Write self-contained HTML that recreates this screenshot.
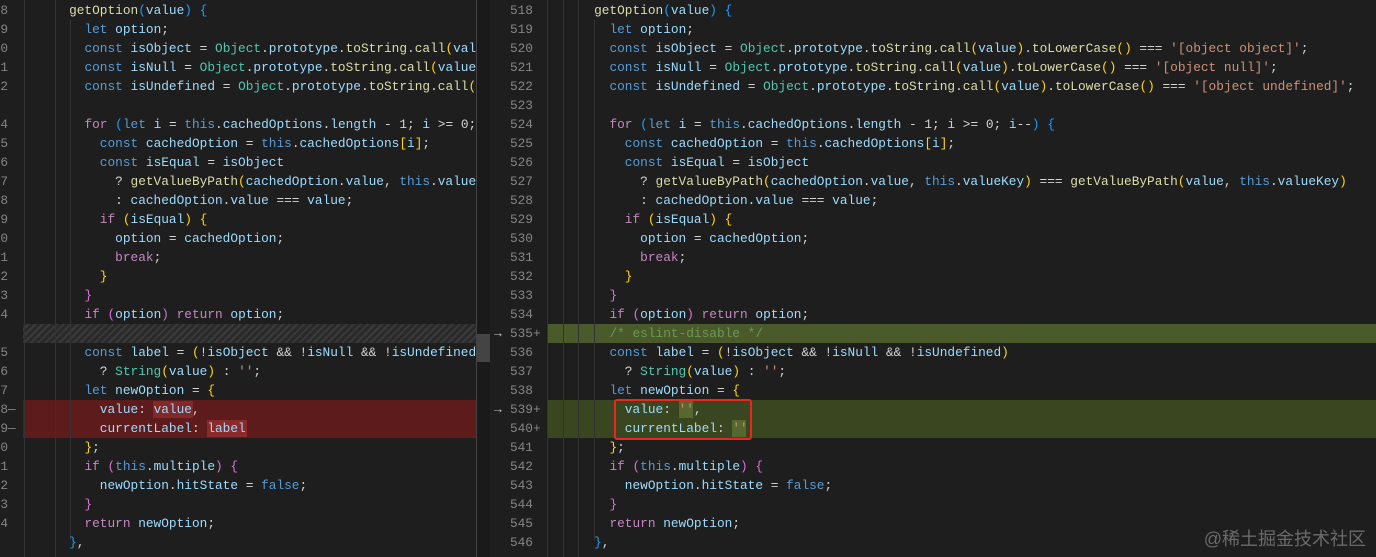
<!DOCTYPE html><html><head><meta charset="utf-8"><style>
body{margin:0;width:1376px;height:557px;background:#1e1e1e;overflow:hidden;position:relative;font-family:"Liberation Mono",monospace;font-size:12.8px;color:#d4d4d4}
.pane{position:absolute;top:0;height:557px;overflow:hidden}
.l{position:absolute;left:0;height:19px;line-height:19px;white-space:pre;width:100%}
.n{position:absolute;white-space:pre;color:#858585;line-height:19px;height:19px;text-align:right}
.k{color:#569cd6}.c{color:#c586c0}.v{color:#9cdcfe}.f{color:#dcdcaa}.t{color:#4ec9b0}.s{color:#ce9178}.m{color:#6a9955}.y{color:#ffd700}.p{color:#da70d6}.b{color:#179fff}
.g{position:absolute;top:0;height:557px;width:1px;background:#333}
</style></head><body>
<div class="pane" style="left:0;width:476px">
<div style="position:absolute;left:23px;top:400px;width:460px;height:38px;background:#5e1b1b"></div>
<div style="position:absolute;left:23px;top:324px;width:460px;height:19px;background:repeating-linear-gradient(135deg,#2a2a2a 0 3px,#3a3a3a 3px 5px)"></div>
<div style="position:absolute;left:153px;top:401px;width:40px;height:17px;background:#822828"></div>
<div style="position:absolute;left:207px;top:420px;width:40px;height:17px;background:#8a2a2a"></div>
<div class="g" style="left:24px"></div><div class="g" style="left:55px"></div><div class="g" style="left:70px;top:20px;height:520px"></div>
<div style="position:absolute;left:0;width:8px">
<div class="n" style="top:1px;right:0">8</div><div class="n" style="top:20px;right:0">9</div><div class="n" style="top:39px;right:0">0</div><div class="n" style="top:58px;right:0">1</div><div class="n" style="top:77px;right:0">2</div><div class="n" style="top:115px;right:0">4</div><div class="n" style="top:134px;right:0">5</div><div class="n" style="top:153px;right:0">6</div><div class="n" style="top:172px;right:0">7</div><div class="n" style="top:191px;right:0">8</div><div class="n" style="top:210px;right:0">9</div><div class="n" style="top:229px;right:0">0</div><div class="n" style="top:248px;right:0">1</div><div class="n" style="top:267px;right:0">2</div><div class="n" style="top:286px;right:0">3</div><div class="n" style="top:305px;right:0">4</div><div class="n" style="top:343px;right:0">5</div><div class="n" style="top:362px;right:0">6</div><div class="n" style="top:381px;right:0">7</div><div class="n" style="top:400px;right:0">8</div><div class="n" style="top:419px;right:0">9</div><div class="n" style="top:438px;right:0">0</div><div class="n" style="top:457px;right:0">1</div><div class="n" style="top:476px;right:0">2</div><div class="n" style="top:495px;right:0">3</div><div class="n" style="top:514px;right:0">4</div></div>
<div class="n" style="left:8px;top:400px">—</div><div class="n" style="left:8px;top:419px">—</div>
<div style="position:absolute;left:23px;top:0;width:460px">
<div class="l" style="top:1px">      <span class="f">getOption</span><span class="b">(</span><span class="v">value</span><span class="b">)</span> <span class="b">{</span></div>
<div class="l" style="top:20px">        <span class="k">let</span> <span class="v">option</span>;</div>
<div class="l" style="top:39px">        <span class="k">const</span> <span class="v">isObject</span> = <span class="t">Object</span>.<span class="v">prototype</span>.<span class="f">toString</span>.<span class="f">call</span><span class="y">(</span><span class="v">value</span><span class="y">)</span>.<span class="f">toLowerCase</span><span class="y">()</span></div>
<div class="l" style="top:58px">        <span class="k">const</span> <span class="v">isNull</span> = <span class="t">Object</span>.<span class="v">prototype</span>.<span class="f">toString</span>.<span class="f">call</span><span class="y">(</span><span class="v">value</span><span class="y">)</span>.</div>
<div class="l" style="top:77px">        <span class="k">const</span> <span class="v">isUndefined</span> = <span class="t">Object</span>.<span class="v">prototype</span>.<span class="f">toString</span>.<span class="f">call</span><span class="y">(</span><span class="v">value</span></div>
<div class="l" style="top:115px">        <span class="c">for</span> <span class="b">(</span><span class="k">let</span> <span class="v">i</span> = <span class="k">this</span>.<span class="v">cachedOptions</span>.<span class="v">length</span> - 1; <span class="v">i</span> &gt;= 0; <span class="v">i</span></div>
<div class="l" style="top:134px">          <span class="k">const</span> <span class="v">cachedOption</span> = <span class="k">this</span>.<span class="v">cachedOptions</span><span class="y">[</span><span class="v">i</span><span class="y">]</span>;</div>
<div class="l" style="top:153px">          <span class="k">const</span> <span class="v">isEqual</span> = <span class="v">isObject</span></div>
<div class="l" style="top:172px">            ? <span class="f">getValueByPath</span><span class="y">(</span><span class="v">cachedOption</span>.<span class="v">value</span>, <span class="k">this</span>.<span class="v">valueKey</span></div>
<div class="l" style="top:191px">            : <span class="v">cachedOption</span>.<span class="v">value</span> === <span class="v">value</span>;</div>
<div class="l" style="top:210px">          <span class="c">if</span> <span class="y">(</span><span class="v">isEqual</span><span class="y">)</span> <span class="y">{</span></div>
<div class="l" style="top:229px">            <span class="v">option</span> = <span class="v">cachedOption</span>;</div>
<div class="l" style="top:248px">            <span class="c">break</span>;</div>
<div class="l" style="top:267px">          <span class="y">}</span></div>
<div class="l" style="top:286px">        <span class="p">}</span></div>
<div class="l" style="top:305px">        <span class="c">if</span> <span class="p">(</span><span class="v">option</span><span class="p">)</span> <span class="c">return</span> <span class="v">option</span>;</div>
<div class="l" style="top:343px">        <span class="k">const</span> <span class="v">label</span> = <span class="y">(</span>!<span class="v">isObject</span> &amp;&amp; !<span class="v">isNull</span> &amp;&amp; !<span class="v">isUndefined</span><span class="y">)</span></div>
<div class="l" style="top:362px">          ? <span class="t">String</span><span class="y">(</span><span class="v">value</span><span class="y">)</span> : <span class="s">''</span>;</div>
<div class="l" style="top:381px">        <span class="k">let</span> <span class="v">newOption</span> = <span class="y">{</span></div>
<div class="l" style="top:400px">          <span class="v">value</span>: <span class="v">value</span>,</div>
<div class="l" style="top:419px">          <span class="v">currentLabel</span>: <span class="v">label</span></div>
<div class="l" style="top:438px">        <span class="y">}</span>;</div>
<div class="l" style="top:457px">        <span class="c">if</span> <span class="p">(</span><span class="k">this</span>.<span class="v">multiple</span><span class="p">)</span> <span class="p">{</span></div>
<div class="l" style="top:476px">          <span class="v">newOption</span>.<span class="v">hitState</span> = <span class="k">false</span>;</div>
<div class="l" style="top:495px">        <span class="p">}</span></div>
<div class="l" style="top:514px">        <span class="c">return</span> <span class="v">newOption</span>;</div>
<div class="l" style="top:533px">      <span class="b">}</span>,</div>
</div></div>
<div style="position:absolute;left:476px;top:0;width:1px;height:557px;background:#444"></div>
<div style="position:absolute;left:477px;top:0;width:13px;height:557px;background:#1a1a1a"></div>
<div style="position:absolute;left:476px;top:334px;width:14px;height:28px;background:#444"></div>
<div class="pane" style="left:490px;width:886px">
<div style="position:absolute;left:58px;top:324px;width:830px;height:19px;background:#4b5a2a"></div>
<div style="position:absolute;left:58px;top:400px;width:830px;height:38px;background:#3a4620"></div>
<div style="position:absolute;left:189px;top:401px;width:14px;height:17px;background:#56682e"></div>
<div style="position:absolute;left:242px;top:420px;width:14px;height:17px;background:#56682e"></div>
<div class="g" style="left:57px"></div><div class="g" style="left:73px"></div><div class="g" style="left:88px"></div><div class="g" style="left:104px;top:20px;height:520px"></div>
<div style="position:absolute;left:4px;top:324px;color:#ccc;line-height:19px">→</div><div style="position:absolute;left:4px;top:400px;color:#ccc;line-height:19px">→</div>
<div style="position:absolute;left:18px;width:25px">
<div class="n" style="top:1px;right:0">518</div><div class="n" style="top:20px;right:0">519</div><div class="n" style="top:39px;right:0">520</div><div class="n" style="top:58px;right:0">521</div><div class="n" style="top:77px;right:0">522</div><div class="n" style="top:96px;right:0">523</div><div class="n" style="top:115px;right:0">524</div><div class="n" style="top:134px;right:0">525</div><div class="n" style="top:153px;right:0">526</div><div class="n" style="top:172px;right:0">527</div><div class="n" style="top:191px;right:0">528</div><div class="n" style="top:210px;right:0">529</div><div class="n" style="top:229px;right:0">530</div><div class="n" style="top:248px;right:0">531</div><div class="n" style="top:267px;right:0">532</div><div class="n" style="top:286px;right:0">533</div><div class="n" style="top:305px;right:0">534</div><div class="n" style="top:324px;right:0">535</div><div class="n" style="top:343px;right:0">536</div><div class="n" style="top:362px;right:0">537</div><div class="n" style="top:381px;right:0">538</div><div class="n" style="top:400px;right:0">539</div><div class="n" style="top:419px;right:0">540</div><div class="n" style="top:438px;right:0">541</div><div class="n" style="top:457px;right:0">542</div><div class="n" style="top:476px;right:0">543</div><div class="n" style="top:495px;right:0">544</div><div class="n" style="top:514px;right:0">545</div><div class="n" style="top:533px;right:0">546</div></div>
<div class="n" style="left:43px;top:324px">+</div><div class="n" style="left:43px;top:400px">+</div><div class="n" style="left:43px;top:419px">+</div>
<div style="position:absolute;left:58px;top:0;width:830px">
<div class="l" style="top:1px">      <span class="f">getOption</span><span class="b">(</span><span class="v">value</span><span class="b">)</span> <span class="b">{</span></div>
<div class="l" style="top:20px">        <span class="k">let</span> <span class="v">option</span>;</div>
<div class="l" style="top:39px">        <span class="k">const</span> <span class="v">isObject</span> = <span class="t">Object</span>.<span class="v">prototype</span>.<span class="f">toString</span>.<span class="f">call</span><span class="y">(</span><span class="v">value</span><span class="y">)</span>.<span class="f">toLowerCase</span><span class="y">()</span> === <span class="s">'[object object]'</span>;</div>
<div class="l" style="top:58px">        <span class="k">const</span> <span class="v">isNull</span> = <span class="t">Object</span>.<span class="v">prototype</span>.<span class="f">toString</span>.<span class="f">call</span><span class="y">(</span><span class="v">value</span><span class="y">)</span>.<span class="f">toLowerCase</span><span class="y">()</span> === <span class="s">'[object null]'</span>;</div>
<div class="l" style="top:77px">        <span class="k">const</span> <span class="v">isUndefined</span> = <span class="t">Object</span>.<span class="v">prototype</span>.<span class="f">toString</span>.<span class="f">call</span><span class="y">(</span><span class="v">value</span><span class="y">)</span>.<span class="f">toLowerCase</span><span class="y">()</span> === <span class="s">'[object undefined]'</span>;</div>
<div class="l" style="top:115px">        <span class="c">for</span> <span class="b">(</span><span class="k">let</span> <span class="v">i</span> = <span class="k">this</span>.<span class="v">cachedOptions</span>.<span class="v">length</span> - 1; <span class="v">i</span> &gt;= 0; <span class="v">i</span>--<span class="b">)</span> <span class="b">{</span></div>
<div class="l" style="top:134px">          <span class="k">const</span> <span class="v">cachedOption</span> = <span class="k">this</span>.<span class="v">cachedOptions</span><span class="y">[</span><span class="v">i</span><span class="y">]</span>;</div>
<div class="l" style="top:153px">          <span class="k">const</span> <span class="v">isEqual</span> = <span class="v">isObject</span></div>
<div class="l" style="top:172px">            ? <span class="f">getValueByPath</span><span class="y">(</span><span class="v">cachedOption</span>.<span class="v">value</span>, <span class="k">this</span>.<span class="v">valueKey</span><span class="y">)</span> === <span class="f">getValueByPath</span><span class="y">(</span><span class="v">value</span>, <span class="k">this</span>.<span class="v">valueKey</span><span class="y">)</span></div>
<div class="l" style="top:191px">            : <span class="v">cachedOption</span>.<span class="v">value</span> === <span class="v">value</span>;</div>
<div class="l" style="top:210px">          <span class="c">if</span> <span class="y">(</span><span class="v">isEqual</span><span class="y">)</span> <span class="y">{</span></div>
<div class="l" style="top:229px">            <span class="v">option</span> = <span class="v">cachedOption</span>;</div>
<div class="l" style="top:248px">            <span class="c">break</span>;</div>
<div class="l" style="top:267px">          <span class="y">}</span></div>
<div class="l" style="top:286px">        <span class="p">}</span></div>
<div class="l" style="top:305px">        <span class="c">if</span> <span class="p">(</span><span class="v">option</span><span class="p">)</span> <span class="c">return</span> <span class="v">option</span>;</div>
<div class="l" style="top:324px">        <span class="m">/* eslint-disable */</span></div>
<div class="l" style="top:343px">        <span class="k">const</span> <span class="v">label</span> = <span class="y">(</span>!<span class="v">isObject</span> &amp;&amp; !<span class="v">isNull</span> &amp;&amp; !<span class="v">isUndefined</span><span class="y">)</span></div>
<div class="l" style="top:362px">          ? <span class="t">String</span><span class="y">(</span><span class="v">value</span><span class="y">)</span> : <span class="s">''</span>;</div>
<div class="l" style="top:381px">        <span class="k">let</span> <span class="v">newOption</span> = <span class="y">{</span></div>
<div class="l" style="top:400px">          <span class="v">value</span>: <span class="s">''</span>,</div>
<div class="l" style="top:419px">          <span class="v">currentLabel</span>: <span class="s">''</span></div>
<div class="l" style="top:438px">        <span class="y">}</span>;</div>
<div class="l" style="top:457px">        <span class="c">if</span> <span class="p">(</span><span class="k">this</span>.<span class="v">multiple</span><span class="p">)</span> <span class="p">{</span></div>
<div class="l" style="top:476px">          <span class="v">newOption</span>.<span class="v">hitState</span> = <span class="k">false</span>;</div>
<div class="l" style="top:495px">        <span class="p">}</span></div>
<div class="l" style="top:514px">        <span class="c">return</span> <span class="v">newOption</span>;</div>
<div class="l" style="top:533px">      <span class="b">}</span>,</div>
</div>
<div style="position:absolute;left:124px;top:399px;width:134px;height:37px;border:2px solid #e8281e;border-radius:3px"></div>
</div>
<div style="position:absolute;right:10px;top:527px;font-family:'Liberation Sans','Noto Sans CJK SC',sans-serif;font-size:18px;color:#6a6a6a;line-height:24px">@稀土掘金技术社区</div>
</body></html>
